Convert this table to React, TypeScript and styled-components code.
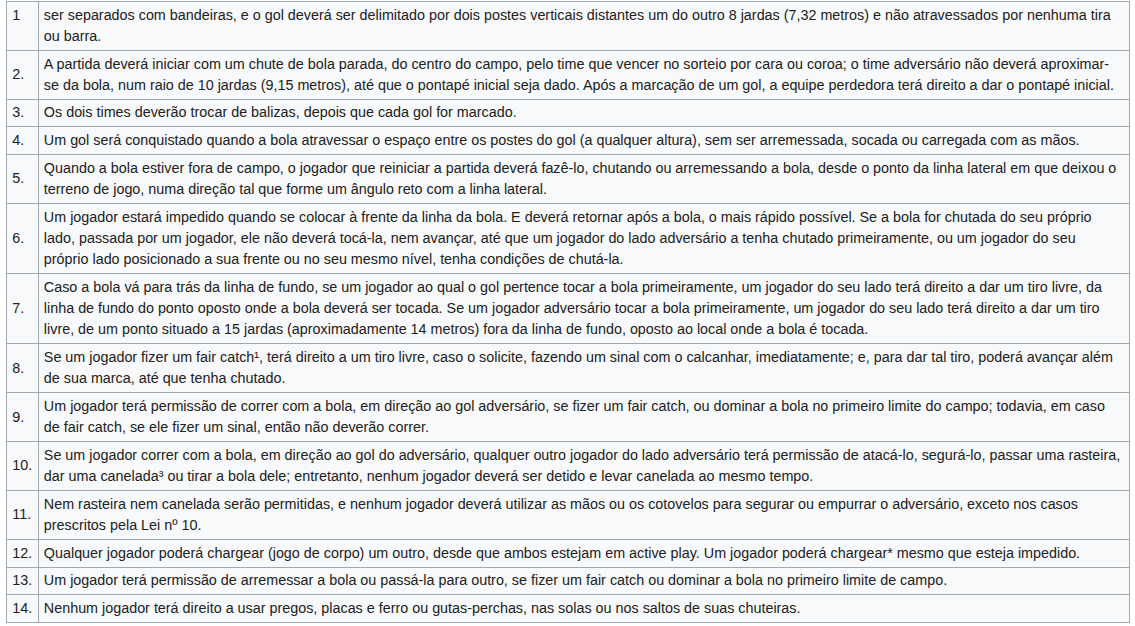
import React from "react";
import styled, { createGlobalStyle } from "styled-components";

const Global = createGlobalStyle`
  html, body { margin: 0; padding: 0; background: #ffffff; }
  body { font-family: "Liberation Sans", Arial, sans-serif; color: #202122; }
`;

const Page = styled.div`
  padding: 1px 0 0 6px;
`;

const Table = styled.table`
  width: 1124px;
  border-collapse: collapse;
  background: #f8f9fa;
  color: #202122;
  border: 1px solid #a2a9b1;
  font-family: "Liberation Sans", Arial, sans-serif;
  font-size: 14.35px;
  line-height: 21.3px;
`;

const Cell = styled.td<{ $num?: boolean; $top?: boolean }>`
  border: 1px solid #a2a9b1;
  padding: 2.66px 5.3px;
  vertical-align: ${(p) => (p.$top ? "top" : "middle")};
  white-space: ${(p) => (p.$num ? "nowrap" : "normal")};
  width: ${(p) => (p.$num ? "1px" : "auto")};
`;

const rows: [string, string][] = [
  ["1", "ser separados com bandeiras, e o gol deverá ser delimitado por dois postes verticais distantes um do outro 8 jardas (7,32 metros) e não atravessados por nenhuma tira ou barra."],
  ["2.", "A partida deverá iniciar com um chute de bola parada, do centro do campo, pelo time que vencer no sorteio por cara ou coroa; o time adversário não deverá aproximar-se da bola, num raio de 10 jardas (9,15 metros), até que o pontapé inicial seja dado. Após a marcação de um gol, a equipe perdedora terá direito a dar o pontapé inicial."],
  ["3.", "Os dois times deverão trocar de balizas, depois que cada gol for marcado."],
  ["4.", "Um gol será conquistado quando a bola atravessar o espaço entre os postes do gol (a qualquer altura), sem ser arremessada, socada ou carregada com as mãos."],
  ["5.", "Quando a bola estiver fora de campo, o jogador que reiniciar a partida deverá fazê-lo, chutando ou arremessando a bola, desde o ponto da linha lateral em que deixou o terreno de jogo, numa direção tal que forme um ângulo reto com a linha lateral."],
  ["6.", "Um jogador estará impedido quando se colocar à frente da linha da bola. E deverá retornar após a bola, o mais rápido possível. Se a bola for chutada do seu próprio lado, passada por um jogador, ele não deverá tocá-la, nem avançar, até que um jogador do lado adversário a tenha chutado primeiramente, ou um jogador do seu próprio lado posicionado a sua frente ou no seu mesmo nível, tenha condições de chutá-la."],
  ["7.", "Caso a bola vá para trás da linha de fundo, se um jogador ao qual o gol pertence tocar a bola primeiramente, um jogador do seu lado terá direito a dar um tiro livre, da linha de fundo do ponto oposto onde a bola deverá ser tocada. Se um jogador adversário tocar a bola primeiramente, um jogador do seu lado terá direito a dar um tiro livre, de um ponto situado a 15 jardas (aproximadamente 14 metros) fora da linha de fundo, oposto ao local onde a bola é tocada."],
  ["8.", "Se um jogador fizer um fair catch¹, terá direito a um tiro livre, caso o solicite, fazendo um sinal com o calcanhar, imediatamente; e, para dar tal tiro, poderá avançar além de sua marca, até que tenha chutado."],
  ["9.", "Um jogador terá permissão de correr com a bola, em direção ao gol adversário, se fizer um fair catch, ou dominar a bola no primeiro limite do campo; todavia, em caso de fair catch, se ele fizer um sinal, então não deverão correr."],
  ["10.", "Se um jogador correr com a bola, em direção ao gol do adversário, qualquer outro jogador do lado adversário terá permissão de atacá-lo, segurá-lo, passar uma rasteira, dar uma canelada³ ou tirar a bola dele; entretanto, nenhum jogador deverá ser detido e levar canelada ao mesmo tempo."],
  ["11.", "Nem rasteira nem canelada serão permitidas, e nenhum jogador deverá utilizar as mãos ou os cotovelos para segurar ou empurrar o adversário, exceto nos casos prescritos pela Lei nº 10."],
  ["12.", "Qualquer jogador poderá chargear (jogo de corpo) um outro, desde que ambos estejam em active play. Um jogador poderá chargear* mesmo que esteja impedido."],
  ["13.", "Um jogador terá permissão de arremessar a bola ou passá-la para outro, se fizer um fair catch ou dominar a bola no primeiro limite de campo."],
  ["14.", "Nenhum jogador terá direito a usar pregos, placas e ferro ou gutas-perchas, nas solas ou nos saltos de suas chuteiras."],
];

export default function App() {
  return (
    <>
      <Global />
      <Page>
        <Table>
          <tbody>
            {rows.map(([n, t], i) => (
              <tr key={n}>
                <Cell $num $top={i === 0}>{n}</Cell>
                <Cell>{t}</Cell>
              </tr>
            ))}
          </tbody>
        </Table>
      </Page>
    </>
  );
}
